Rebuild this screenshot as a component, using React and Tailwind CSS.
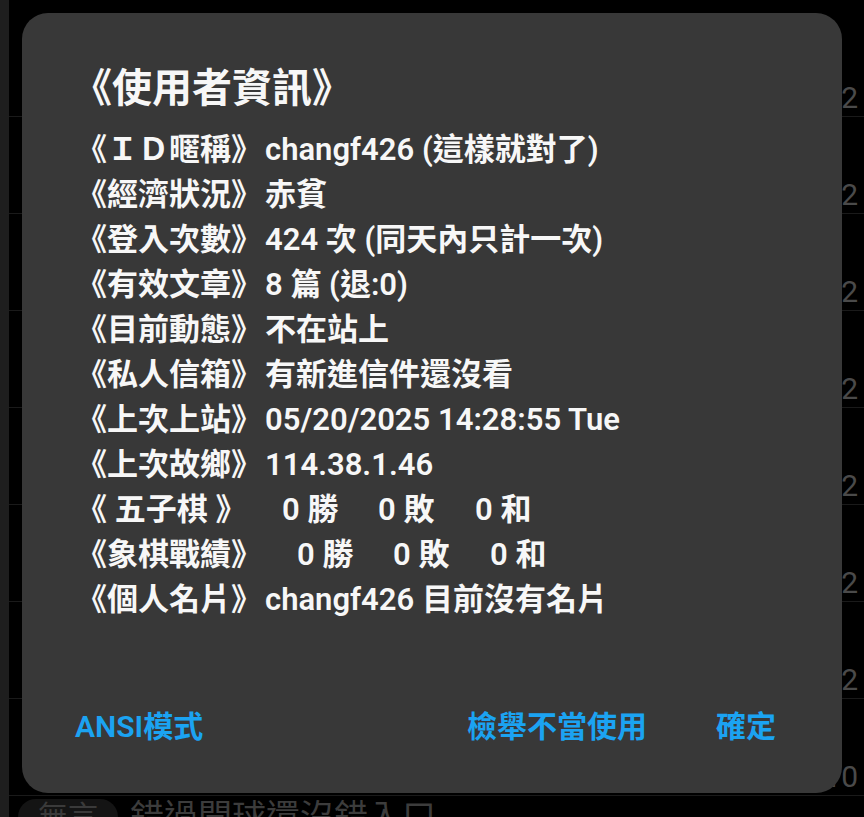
const rows = [
  { label: "《ＩＤ暱稱》", value: "changf426 (這樣就對了)" },
  { label: "《經濟狀況》", value: "赤貧" },
  { label: "《登入次數》", value: "424 次 (同天內只計一次)" },
  { label: "《有效文章》", value: "8 篇 (退:0)" },
  { label: "《目前動態》", value: "不在站上" },
  { label: "《私人信箱》", value: "有新進信件還沒看" },
  { label: "《上次上站》", value: "05/20/2025 14:28:55 Tue" },
  { label: "《上次故鄉》", value: "114.38.1.46" },
];

/* background list rows, mostly hidden behind the dialog */
const listRows = ["2", "2", "2", "2", "2", "2", "2", "0"];

export default function App() {
  return (
    <div className="relative h-[817px] w-[864px] overflow-hidden bg-black font-['Roboto','Noto_Sans_CJK_TC',sans-serif]">
      {/* ===================== Board list behind the dialog ===================== */}
      <div className="flex h-full">
        <div className="w-[9px] shrink-0 bg-[#1e1e1e]" />
        <div className="flex min-w-0 flex-1 flex-col pt-[20px]">
          {listRows.map((n, i) => (
            <div
              key={i}
              className="flex h-[97px] shrink-0 items-end justify-end border-b border-[#1a1a1a] pb-[3px] pr-[6px]"
            >
              <span className="text-[30px] leading-none text-[#4a4a4a]">1{n}</span>
            </div>
          ))}
          <div className="flex items-start gap-3 pl-[9px] pt-[3px]">
            <span className="rounded-full bg-[#141414] px-[20px] text-[30px] leading-[36px] text-[#3a3a3a]">
              無言
            </span>
            <span className="text-[34px] leading-[36px] text-[#3c3c3c]">錯過開球還沒錯入口</span>
          </div>
        </div>
      </div>

      {/* ===================== User info dialog ===================== */}
      <div className="absolute left-[22px] top-[13px] flex h-[780px] w-[820px] flex-col rounded-[26px] bg-[#383838] font-semibold text-[#f7f7f7]">
        <div className="pl-[54px] pt-[52px]">
          <h1 className="-ml-[4px] text-[40px] leading-[48px] font-semibold">《使用者資訊》</h1>

          <div className="mt-[14px] text-[31px] leading-[45px]">
            {rows.map((r) => (
              <div key={r.label} className="whitespace-nowrap">
                <span className="inline-block w-[189px]">{r.label}</span>
                <span>{r.value}</span>
              </div>
            ))}

            <div className="whitespace-nowrap">
              <span className="inline-block w-[206px] whitespace-pre">《 五子棋 》</span>
              <span className="inline-block w-[96px]">0 勝</span>
              <span className="inline-block w-[97px]">0 敗</span>
              <span>0 和</span>
            </div>
            <div className="whitespace-nowrap">
              <span className="inline-block w-[221px]">《象棋戰績》</span>
              <span className="inline-block w-[96px]">0 勝</span>
              <span className="inline-block w-[97px]">0 敗</span>
              <span>0 和</span>
            </div>
            <div className="whitespace-nowrap">
              <span className="inline-block w-[189px]">《個人名片》</span>
              <span>changf426 目前沒有名片</span>
            </div>
          </div>
        </div>

        {/* Dialog buttons */}
        <div className="mt-auto flex items-center justify-between pb-[46px] pl-[53px] pr-[66px] text-[30px] leading-[40px] font-semibold text-[#1ba3f2]">
          <button type="button">ANSI模式</button>
          <div className="flex items-center gap-[69px]">
            <button type="button">檢舉不當使用</button>
            <button type="button">確定</button>
          </div>
        </div>
      </div>
    </div>
  );
}
